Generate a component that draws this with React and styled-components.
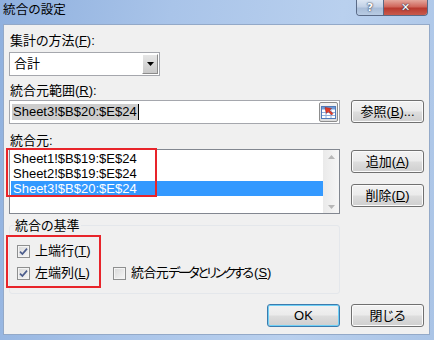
import React from 'react';
import styled, { createGlobalStyle } from 'styled-components';

const GlobalStyle = createGlobalStyle`
  body {
    margin: 0;
    background: #fff;
  }
`;

const FONT = `"Liberation Sans", "Noto Sans CJK JP", sans-serif`;

const Window = styled.div`
  width: 434px;
  height: 340px;
  box-sizing: border-box;
  padding: 0 4px 5px 3px;
  display: flex;
  flex-direction: column;
  background: linear-gradient(100deg, #8fb0de 0%, #a9c4e9 35%, #b9d0ee 70%, #aac4e6 100%);
  font-family: ${FONT};
  font-feature-settings: "palt";
  color: #000;
`;

const TitleBar = styled.div`
  height: 24px;
  display: flex;
  justify-content: space-between;
  align-items: flex-start;
`;

const Title = styled.div`
  font-size: 12.5px;
  line-height: 20px;
  letter-spacing: 0.2px;
`;

const Caption = styled.div`
  display: flex;
  margin-right: 2px;
  border: 1px solid #5a6a86;
  border-top: none;
  border-radius: 0 0 4px 4px;
  overflow: hidden;
  height: 15px;
`;

const CapButton = styled.div`
  width: ${(p) => p.$w}px;
  height: 15px;
  display: grid;
  place-items: center;
  font-family: "DejaVu Sans", sans-serif;
  font-size: 11px;
  font-weight: bold;
  line-height: 1;
  color: #fff;
  text-shadow: 0 0 2px #2a3650, 0 0 1px #2a3650;
  background: ${(p) =>
    p.$close
      ? 'linear-gradient(180deg, #e4a79d 0%, #d0665b 45%, #b93a2f 55%, #c85a4c 100%)'
      : 'linear-gradient(180deg, #dce6f3 0%, #c2d1e6 45%, #a9bdd8 55%, #b8cbe3 100%)'};
  & + & {
    border-left: 1px solid #5a6a86;
  }
`;

const Panel = styled.div`
  flex: 1;
  display: flex;
  flex-direction: column;
  background: #f0f0f0;
  border: 1px solid #93a9c8;
  padding: 0 5px;
`;

const Label = styled.div`
  height: 17px;
  line-height: 17px;
  font-size: 13px;
  padding-left: 1px;
  margin-top: ${(p) => p.$mt || 0}px;
`;

const Select = styled.div`
  margin-top: 3px;
  width: 151px;
  height: 24px;
  box-sizing: border-box;
  border: 1px solid #a5a7ad;
  background: #fff;
  display: flex;
  align-items: stretch;
`;

const SelectText = styled.div`
  flex: 1;
  font-size: 13px;
  line-height: 22px;
  padding-left: 4px;
`;

const DropButton = styled.div`
  width: 16px;
  margin: 1px;
  box-sizing: border-box;
  border: 1px solid #8b8b8b;
  border-top-color: #fff;
  border-left-color: #fff;
  background: linear-gradient(180deg, #e6e6e6, #c9c9c9);
  display: grid;
  place-items: center;
`;

const Row = styled.div`
  display: grid;
  grid-template-columns: 331px 73px;
  column-gap: 11px;
  align-items: start;
  margin-top: ${(p) => p.$mt || 0}px;
`;

const RangeInput = styled.div`
  height: 24px;
  box-sizing: border-box;
  border: 1px solid #a5a7ad;
  background: #fff;
  display: flex;
  align-items: center;
  padding-left: 2px;
`;

const Selected = styled.span`
  background: #cdcdcd;
  font-size: 13px;
  line-height: 16px;
  padding: 0 1px;
`;

const Caret = styled.span`
  width: 1px;
  height: 16px;
  background: #000;
`;

const PickButton = styled.div`
  margin-left: auto;
  margin-right: 1px;
  width: 19px;
  height: 20px;
  box-sizing: border-box;
  border: 1px solid #8d8d8d;
  border-radius: 2px;
  background: linear-gradient(180deg, #f4f4f4, #dcdcdc);
  display: grid;
  place-items: center;
`;

const Button = styled.div`
  width: 73px;
  height: 23px;
  box-sizing: border-box;
  border: 1px solid ${(p) => (p.$focus ? '#3d7bad' : '#707070')};
  border-radius: 3px;
  background: linear-gradient(180deg, #f2f2f2 0%, #ebebeb 48%, #dddddd 52%, #cfcfcf 100%);
  box-shadow: inset 0 0 0 1px ${(p) => (p.$focus ? '#6fd0f6' : '#fbfbfb')};
  font-size: 13px;
  line-height: 21px;
  text-align: center;
`;

const ListBox = styled.div`
  position: relative;
  height: 65px;
  box-sizing: border-box;
  border: 1px solid #828790;
  background: #fff;
  padding: 1px 0 0 1px;
  display: flex;
`;

const Items = styled.div`
  flex: 1;
`;

const Item = styled.div`
  height: 15px;
  line-height: 15px;
  font-size: 13px;
  padding-left: 2px;
  background: ${(p) => (p.$selected ? '#3399ff' : 'transparent')};
  color: ${(p) => (p.$selected ? '#fff' : '#000')};
`;

const ScrollBar = styled.div`
  width: 16px;
  margin-top: -1px;
  background: linear-gradient(90deg, #eaeaea, #f6f6f6);
  display: flex;
  flex-direction: column;
  justify-content: space-between;
  align-items: center;
  padding: 5px 0 4px;
`;

const Annotation = styled.div`
  position: absolute;
  left: ${(p) => p.$x}px;
  top: ${(p) => p.$y}px;
  width: ${(p) => p.$w}px;
  height: ${(p) => p.$h}px;
  box-sizing: border-box;
  border: 2px solid #e8242a;
  pointer-events: none;
`;

const ButtonCol = styled.div`
  display: flex;
  flex-direction: column;
  gap: 11px;
  padding-top: 1px;
`;

const Group = styled.div`
  position: relative;
  margin-top: 2px;
  width: 331px;
  height: 78px;
`;

const GroupFrame = styled.div`
  position: absolute;
  left: 0;
  right: 0;
  top: 9px;
  bottom: 0;
  border: 1px solid #e4e7eb;
  border-radius: 3px;
`;

const GroupLabel = styled.div`
  position: relative;
  display: inline-block;
  margin-left: 5px;
  padding: 0 1px;
  background: #f0f0f0;
  height: 17px;
  line-height: 17px;
  font-size: 13px;
`;

const CheckRow = styled.div`
  position: relative;
  display: flex;
  align-items: center;
  height: 16px;
  padding-left: 8px;
  margin-top: ${(p) => p.$mt}px;
`;

const Check = styled.div`
  display: flex;
  align-items: center;
  gap: 5px;
  width: ${(p) => (p.$w ? `${p.$w}px` : 'auto')};
  font-size: 13px;
  line-height: 16px;
`;

const Tight = styled.span`
  letter-spacing: ${(p) => p.$ls}px;
`;

const Box = styled.div`
  width: 13px;
  height: 13px;
  box-sizing: border-box;
  border: 1px solid #8e8f8f;
  background: linear-gradient(135deg, #d8d8d8, #f7f7f7);
  box-shadow: inset 0 0 0 1px #f4f4f4;
  display: grid;
  place-items: center;
`;

const Footer = styled.div`
  margin-top: auto;
  margin-bottom: 7px;
  display: flex;
  justify-content: flex-end;
  gap: 11px;
`;

const Key = styled.span`
  text-decoration: underline;
  text-underline-offset: 1px;
`;

const CheckBox = ({ checked }) => (
  <Box>
    {checked && (
      <svg width="9" height="9" viewBox="0 0 9 9">
        <path d="M1 4.6 L3.4 7 L8 1.6" fill="none" stroke="#4b5c8c" strokeWidth="1.7" />
      </svg>
    )}
  </Box>
);

const PickIcon = () => (
  <svg width="15" height="13" viewBox="0 0 15 13">
    <rect x="0.5" y="0.5" width="14" height="12" fill="#fff" stroke="#4f79b8" />
    <rect x="1" y="1" width="13" height="2.5" fill="#6f9ad6" />
    <path d="M1 6.5 H14 M1 9.5 H14 M5 3.5 V12 M10 3.5 V12" stroke="#8fb0dc" strokeWidth="1" />
    <path d="M4 1.5 L10.5 2.5 L8.6 4.2 L12 7.6 L10.6 9 L7.2 5.6 L5.4 7.4 Z" fill="#e23b2a" stroke="#a0180f" strokeWidth="0.5" />
  </svg>
);

const Arrow = ({ up }) => (
  <svg width="7" height="4" viewBox="0 0 7 4">
    <path d={up ? 'M0 4 L3.5 0 L7 4 Z' : 'M0 0 L3.5 4 L7 0 Z'} fill="#b7b7b7" />
  </svg>
);

const sources = ['Sheet1!$B$19:$E$24', 'Sheet2!$B$19:$E$24', 'Sheet3!$B$20:$E$24'];

const App = () => {
  return (
    <>
      <GlobalStyle />
      <Window>
        <TitleBar>
          <Title>統合の設定</Title>
          <Caption>
            <CapButton $w={26}>?</CapButton>
            <CapButton $w={43} $close>✕</CapButton>
          </Caption>
        </TitleBar>
        <Panel>
          <Label $mt={7}>
            集計の方法(<Key>F</Key>):
          </Label>
          <Select>
            <SelectText>合計</SelectText>
            <DropButton>
              <svg width="7" height="4" viewBox="0 0 7 4">
                <path d="M0 0 L3.5 4 L7 0 Z" fill="#000" />
              </svg>
            </DropButton>
          </Select>
          <Label $mt={6}>
            統合元範囲(<Key>R</Key>):
          </Label>
          <Row $mt={1}>
            <RangeInput>
              <Selected>Sheet3!$B$20:$E$24</Selected>
              <Caret />
              <PickButton>
                <PickIcon />
              </PickButton>
            </RangeInput>
            <Button>
              参照(<Key>B</Key>)...
            </Button>
          </Row>
          <Label $mt={8}>統合元:</Label>
          <Row>
            <ListBox>
              <Items>
                {sources.map((s, i) => (
                  <Item key={s} $selected={i === sources.length - 1}>
                    {s}
                  </Item>
                ))}
              </Items>
              <ScrollBar>
                <Arrow up />
                <Arrow />
              </ScrollBar>
              <Annotation $x={-4} $y={-2} $w={151} $h={49} />
            </ListBox>
            <ButtonCol>
              <Button>
                追加(<Key>A</Key>)
              </Button>
              <Button>
                削除(<Key>D</Key>)
              </Button>
            </ButtonCol>
          </Row>
          <Group>
            <GroupFrame />
            <GroupLabel>統合の基準</GroupLabel>
            <CheckRow $mt={9}>
              <Check>
                <CheckBox checked />
                <span>上端行(<Key>T</Key>)</span>
              </Check>
            </CheckRow>
            <CheckRow $mt={6}>
              <Check $w={96}>
                <CheckBox checked />
                <span>左端列(<Key>L</Key>)</span>
              </Check>
              <Check>
                <CheckBox />
                <span>
                  <Tight $ls={-0.6}>統合元</Tight>
                  <Tight $ls={-2.4}>データとリンクす</Tight>
                  る(<Key>S</Key>)
                </span>
              </Check>
            </CheckRow>
            <Annotation $x={-3} $y={19} $w={95} $h={53} />
          </Group>
          <Footer>
            <Button $focus>OK</Button>
            <Button>閉じる</Button>
          </Footer>
        </Panel>
      </Window>
    </>
  );
};

export default App;
